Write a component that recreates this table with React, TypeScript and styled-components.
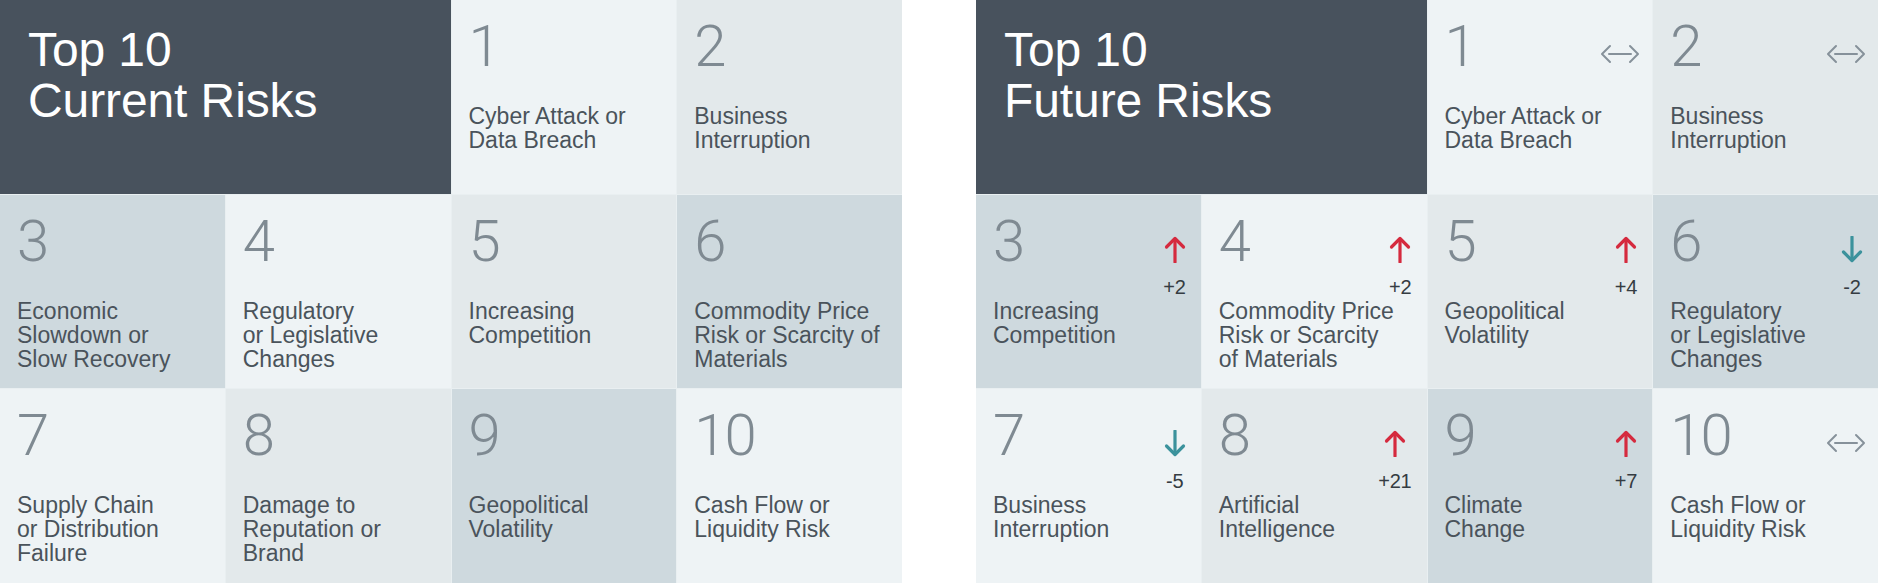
import styled, { createGlobalStyle } from 'styled-components';

type Tone = 'light' | 'mid' | 'dark';
type Trend = { dir: 'up' | 'down' | 'same'; delta?: string };

type Risk = {
  rank: number;
  lines: string[];
  tone: Tone;
  trend?: Trend;
};

const GlobalStyle = createGlobalStyle`
  html, body {
    margin: 0;
    padding: 0;
    background: #ffffff;
  }
  body {
    font-family: "Liberation Sans", Arial, sans-serif;
  }
`;

const tones: Record<Tone, string> = {
  light: '#eef3f5',
  mid: '#e3e9eb',
  dark: '#ced9de',
};

const Page = styled.div`
  display: flex;
  gap: 74px;
  width: 1878px;
  height: 583px;
`;

const Panel = styled.section`
  display: grid;
  grid-template-columns: repeat(4, 1fr);
  grid-template-rows: repeat(3, 1fr);
  gap: 1px;
  width: 902px;
  height: 583px;
  background: #e9eff1;
`;

const TitleCell = styled.div`
  grid-column: span 2;
  background: #48525d;
  padding: 24px 28px;
  color: #ffffff;
  font-family: "Liberation Sans", Arial, sans-serif;
  font-size: 48px;
  line-height: 51px;
  letter-spacing: -0.1px;
`;

const Cell = styled.div<{ $tone: Tone }>`
  display: flex;
  flex-direction: column;
  background: ${(p) => tones[p.$tone]};
  padding: 17px 15px 0 17px;
`;

const CellHead = styled.div`
  display: flex;
  justify-content: space-between;
  align-items: flex-start;
  height: 87px;
`;

const Rank = styled.span`
  font-family: Roboto, "Open Sans", sans-serif;
  font-weight: 300;
  font-size: 58px;
  line-height: 58px;
  letter-spacing: -2px;
  color: #7f8a92;
`;

const Change = styled.div`
  display: flex;
  flex-direction: column;
  align-items: center;
  margin-top: 24px;
  gap: 13px;
`;

const Delta = styled.span`
  font-family: "Liberation Sans", Arial, sans-serif;
  font-size: 20px;
  line-height: 22px;
  color: #353c42;
  letter-spacing: -0.2px;
`;

const Steady = styled.div`
  margin-top: 25px;
  margin-right: -3px;
`;

const Label = styled.div`
  font-family: "Liberation Sans", Arial, sans-serif;
  font-size: 23px;
  line-height: 24px;
  letter-spacing: 0;
  color: #4a535b;
  white-space: nowrap;
`;

function TrendIcon({ trend }: { trend: Trend }) {
  if (trend.dir === 'same') {
    return (
      <Steady>
        <svg width="40" height="24" viewBox="0 0 40 24" fill="none" stroke="#86919a" strokeWidth="2" strokeLinecap="round" strokeLinejoin="round">
          <path d="M10 4 L2 12 L10 20" />
          <path d="M30 4 L38 12 L30 20" />
          <path d="M9 12 H31" />
        </svg>
      </Steady>
    );
  }
  const up = trend.dir === 'up';
  const color = up ? '#d52a3e' : '#3b929c';
  return (
    <Change>
      <svg width="22" height="27" viewBox="0 0 22 27" fill="none" stroke={color} strokeWidth="3.2" strokeLinecap="round" strokeLinejoin="round">
        {up ? (
          <>
            <path d="M11 3 V26" />
            <path d="M2.5 11 L11 2.5 L19.5 11" />
          </>
        ) : (
          <>
            <path d="M11 1 V24" />
            <path d="M2.5 16 L11 24.5 L19.5 16" />
          </>
        )}
      </svg>
      <Delta>{trend.delta}</Delta>
    </Change>
  );
}

function RiskCell({ risk }: { risk: Risk }) {
  return (
    <Cell $tone={risk.tone}>
      <CellHead>
        <Rank>{risk.rank}</Rank>
        {risk.trend && <TrendIcon trend={risk.trend} />}
      </CellHead>
      <Label>
        {risk.lines.map((l, i) => (
          <div key={i}>{l}</div>
        ))}
      </Label>
    </Cell>
  );
}

const current: Risk[] = [
  { rank: 1, lines: ['Cyber Attack or', 'Data Breach'], tone: 'light' },
  { rank: 2, lines: ['Business', 'Interruption'], tone: 'mid' },
  { rank: 3, lines: ['Economic', 'Slowdown or', 'Slow Recovery'], tone: 'dark' },
  { rank: 4, lines: ['Regulatory', 'or Legislative', 'Changes'], tone: 'light' },
  { rank: 5, lines: ['Increasing', 'Competition'], tone: 'mid' },
  { rank: 6, lines: ['Commodity Price', 'Risk or Scarcity of', 'Materials'], tone: 'dark' },
  { rank: 7, lines: ['Supply Chain', 'or Distribution', 'Failure'], tone: 'light' },
  { rank: 8, lines: ['Damage to', 'Reputation or', 'Brand'], tone: 'mid' },
  { rank: 9, lines: ['Geopolitical', 'Volatility'], tone: 'dark' },
  { rank: 10, lines: ['Cash Flow or', 'Liquidity Risk'], tone: 'light' },
];

const future: Risk[] = [
  { rank: 1, lines: ['Cyber Attack or', 'Data Breach'], tone: 'light', trend: { dir: 'same' } },
  { rank: 2, lines: ['Business', 'Interruption'], tone: 'mid', trend: { dir: 'same' } },
  { rank: 3, lines: ['Increasing', 'Competition'], tone: 'dark', trend: { dir: 'up', delta: '+2' } },
  { rank: 4, lines: ['Commodity Price', 'Risk or Scarcity', 'of Materials'], tone: 'light', trend: { dir: 'up', delta: '+2' } },
  { rank: 5, lines: ['Geopolitical', 'Volatility'], tone: 'mid', trend: { dir: 'up', delta: '+4' } },
  { rank: 6, lines: ['Regulatory', 'or Legislative', 'Changes'], tone: 'dark', trend: { dir: 'down', delta: '-2' } },
  { rank: 7, lines: ['Business', 'Interruption'], tone: 'light', trend: { dir: 'down', delta: '-5' } },
  { rank: 8, lines: ['Artificial', 'Intelligence'], tone: 'mid', trend: { dir: 'up', delta: '+21' } },
  { rank: 9, lines: ['Climate', 'Change'], tone: 'dark', trend: { dir: 'up', delta: '+7' } },
  { rank: 10, lines: ['Cash Flow or', 'Liquidity Risk'], tone: 'light', trend: { dir: 'same' } },
];

function RiskPanel({ title, risks }: { title: string; risks: Risk[] }) {
  return (
    <Panel>
      <TitleCell>
        Top 10
        <br />
        {title}
      </TitleCell>
      {risks.map((r) => (
        <RiskCell key={r.rank} risk={r} />
      ))}
    </Panel>
  );
}

export default function App() {
  return (
    <>
      <GlobalStyle />
      <Page>
        <RiskPanel title="Current Risks" risks={current} />
        <RiskPanel title="Future Risks" risks={future} />
      </Page>
    </>
  );
}
